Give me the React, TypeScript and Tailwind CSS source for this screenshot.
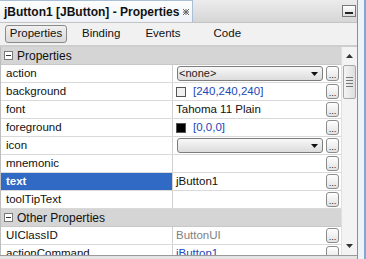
import React from 'react';

type Row = {
  name: string;
  value?: React.ReactNode;
  kind?: 'combo' | 'plain';
  selected?: boolean;
};

const font = { fontFamily: '"Liberation Sans", Arial, sans-serif' };

function DotsButton() {
  return (
    <div className="flex h-[15px] w-[13px] items-end justify-center rounded-[3px] border border-[#8c8c8c] bg-gradient-to-b from-white to-[#e2e2e2] pb-[1px] text-[9px] leading-[8px] text-[#222]">
      ...
    </div>
  );
}

function Combo({ text }: { text?: string }) {
  return (
    <div className="mx-[1px] flex h-[15px] flex-1 items-center justify-between rounded-[3px] border border-[#7d7d7d] bg-gradient-to-b from-[#f8f8f8] to-[#dcdcdc] pl-[1px] pr-[4px] text-[11px] text-[#222]">
      <span>{text}</span>
      <svg width="7" height="4" viewBox="0 0 7 4">
        <path d="M0 0h7L3.5 4z" fill="#111" />
      </svg>
    </div>
  );
}

function Swatch({ color }: { color: string }) {
  return <span className="mr-[7px] inline-block h-[10px] w-[10px] border border-[#555]" style={{ background: color }} />;
}

function PropRow({ name, value, kind, selected }: Row) {
  return (
    <div className="flex h-[18px] border-b border-[#d9d9d9]">
      <div
        className={
          'flex w-[172px] shrink-0 items-center border-r border-[#d0d0d0] pl-[5px] text-[11.5px] ' +
          (selected ? 'bg-[#316ac5] font-bold text-white' : 'bg-white text-[#111]')
        }
      >
        {name}
      </div>
      <div className="flex flex-1 items-center bg-white pl-[3px] text-[11.5px] text-[#111]">
        {kind === 'combo' ? <Combo text={value as string} /> : value}
      </div>
      <div className="flex w-[17px] shrink-0 items-center justify-center bg-white">
        <DotsButton />
      </div>
    </div>
  );
}

function SectionHeader({ title }: { title: string }) {
  return (
    <div className="flex h-[18px] items-center border-b border-[#c8c8c8] bg-[#d5d5d5] pl-[3px] text-[12px] text-[#111]">
      <span className="mr-[4px] flex h-[9px] w-[9px] items-center justify-center border border-[#7a7a7a] bg-white">
        <span className="block h-[1px] w-[5px] bg-[#333]" />
      </span>
      {title}
    </div>
  );
}

function ScrollBar() {
  return (
    <div className="flex w-[16px] shrink-0 flex-col border-l border-[#e0e0e0] bg-[#f3f3f3]">
      <div className="flex h-[18px] items-center justify-center">
        <svg width="7" height="4" viewBox="0 0 7 4">
          <path d="M3.5 0L7 4H0z" fill="#333" />
        </svg>
      </div>
      <div className="mx-[1px] flex h-[34px] items-center justify-center rounded-[2px] border border-[#a8a8a8] bg-gradient-to-r from-[#f4f4f4] to-[#dedede]">
        <div className="flex flex-col gap-[2px]">
          <span className="block h-[1px] w-[7px] bg-[#777]" />
          <span className="block h-[1px] w-[7px] bg-[#777]" />
          <span className="block h-[1px] w-[7px] bg-[#777]" />
          <span className="block h-[1px] w-[7px] bg-[#777]" />
        </div>
      </div>
      <div className="flex-1" />
      <div className="flex h-[18px] items-center justify-center">
        <svg width="7" height="4" viewBox="0 0 7 4">
          <path d="M0 0h7L3.5 4z" fill="#333" />
        </svg>
      </div>
    </div>
  );
}

export default function App() {
  const props: Row[] = [
    { name: 'action', value: '<none>', kind: 'combo' },
    {
      name: 'background',
      value: (
        <span className="flex items-center">
          <Swatch color="#f0f0f0" />
          <span className="text-[#2148b8]">[240,240,240]</span>
        </span>
      ),
    },
    { name: 'font', value: 'Tahoma 11 Plain' },
    {
      name: 'foreground',
      value: (
        <span className="flex items-center">
          <Swatch color="#000" />
          <span className="text-[#2148b8]">[0,0,0]</span>
        </span>
      ),
    },
    { name: 'icon', value: '', kind: 'combo' },
    { name: 'mnemonic', value: '' },
    { name: 'text', value: 'jButton1', selected: true },
    { name: 'toolTipText', value: '' },
  ];

  const other: Row[] = [
    { name: 'UIClassID', value: <span className="text-[#808080]">ButtonUI</span> },
    { name: 'actionCommand', value: <span className="text-[#2148b8]">jButton1</span> },
  ];

  return (
    <div className="flex h-[259px] w-[366px] overflow-hidden bg-[#eaeaea]" style={font}>
      <div className="flex w-[358px] shrink-0 flex-col border-r border-[#8e8e8e] bg-[#f0f0f0]">
        {/* title bar */}
        <div className="flex h-[23px] shrink-0 border-b border-[#c4c4c4] bg-gradient-to-b from-[#ececec] to-[#d6d6d6]">
          <div className="flex w-[193px] items-center border-r border-t border-[#a9bfd6] bg-gradient-to-b from-[#fdfdfd] to-[#eef2f6] pl-[4px]">
            <span className="text-[12px] font-bold text-[#111]">jButton1 [JButton] - Properties</span>
            <svg className="ml-auto mr-[3px]" width="6" height="6" viewBox="0 0 6 6">
              <path d="M0 0l6 6M6 0L0 6M0 3h6M3 0v6" stroke="#666" strokeWidth="1" />
            </svg>
          </div>
          <div className="flex flex-1 items-center justify-end pr-[1px]">
            <div className="flex h-[12px] w-[14px] items-center justify-center border border-[#777] bg-gradient-to-b from-white to-[#dcdcdc]">
              <span className="mt-[3px] block h-[2px] w-[8px] bg-[#222]" />
            </div>
          </div>
        </div>

        {/* tabs */}
        <div className="flex h-[24px] shrink-0 items-center border-b-2 border-[#cdcdcd] bg-[#f1f1f1] pl-[5px] text-[11.5px] text-[#111]">
          <div className="flex h-[18px] w-[62px] items-center justify-center rounded-[3px] border border-[#8a8a8a] bg-gradient-to-b from-[#f0f0f0] to-[#dadada]">
            Properties
          </div>
          <span className="ml-[15px]">Binding</span>
          <span className="ml-[25px]">Events</span>
          <span className="ml-[33px]">Code</span>
        </div>

        {/* table */}
        <div className="flex min-h-0 flex-1 border-b border-[#9a9a9a]">
          <div className="min-w-0 flex-1 overflow-hidden border-l border-[#bdbdbd]">
            <SectionHeader title="Properties" />
            {props.map((r) => (
              <PropRow key={r.name} {...r} />
            ))}
            <SectionHeader title="Other Properties" />
            {other.map((r) => (
              <PropRow key={r.name} {...r} />
            ))}
          </div>
          <ScrollBar />
        </div>
        <div className="h-[3px] shrink-0 bg-[#e4e4e4]" />
      </div>
      <div className="flex-1 border-r-2 border-[#7fa6d6] bg-[#eef3f8]" />
    </div>
  );
}
